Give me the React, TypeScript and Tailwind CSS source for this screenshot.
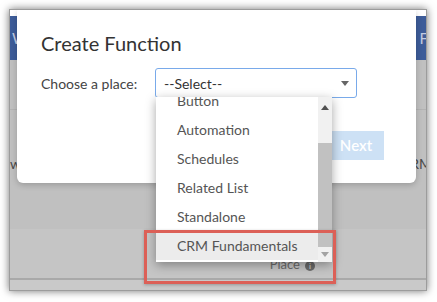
const ITEMS = ["Button", "Automation", "Schedules", "Related List", "Standalone", "CRM Fundamentals"];

function Caret({ className }: { className?: string }) {
  return (
    <svg width="8" height="5" viewBox="0 0 8 5" className={className}>
      <path d="M0 0 L8 0 L4 5 Z" fill="currentColor" />
    </svg>
  );
}

function PlaceList() {
  return (
    <div className="absolute left-[146px] top-[87px] w-[176px] h-[165px] bg-white flex overflow-hidden shadow-[0_3px_10px_rgba(0,0,0,0.35)]">
      <div className="flex-1 overflow-hidden">
        <div className="-mt-[11px]">
          {ITEMS.map((item) => (
            <div
              key={item}
              className={`h-[29px] flex items-center pl-[21px] text-[14px] text-[#555] ${
                item === "CRM Fundamentals" ? "bg-[#ececec]" : ""
              }`}
            >
              {item}
            </div>
          ))}
        </div>
      </div>
      <div className="w-[14px] bg-[#f1f1f1] flex flex-col">
        <div className="h-[20px] flex items-center justify-center text-[#505050]">
          <Caret className="rotate-180" />
        </div>
        <div className="h-[26px]" />
        <div className="h-[104px] bg-[#c1c1c1]" />
        <div className="flex-1 flex items-center justify-center text-[#a3a3a3]">
          <Caret />
        </div>
      </div>
    </div>
  );
}

export default function App() {
  return (
    <div className="w-[437px] h-[302px] bg-white pt-[9px] pl-[9px] font-['Lato',sans-serif]">
      <div className="relative w-[418px] h-[282px] border border-[#9c9c9c] overflow-hidden shadow-[0_0_8px_rgba(0,0,0,0.55)] flex flex-col">
        {/* page behind the overlay */}
        <div className="h-[6px] bg-white" />
        <div className="h-[44px] bg-[#3d5c99] flex items-center justify-between px-[2px] text-[15px] text-[#c3cbe0]">
          <span>W</span>
          <span className="pr-[0px] -mr-[4px]">F</span>
        </div>
        <div className="h-[50px] bg-[#c0c0c0] border-b border-[#b3b3b3]" />
        <div className="h-[119px] bg-[#c0c0c0] flex items-start justify-between pt-[43px] text-[14px] text-[#4a4a4a]">
          <span>w</span>
          <span className="-mr-[6px]">CRM</span>
        </div>
        <div className="h-[49px] bg-[#c5c5c5] flex items-end justify-end pr-[111px] pb-[4px] gap-[5px] text-[13px] text-[#6b6b6b]">
          <span>Place</span>
          <span className="w-[10px] h-[10px] rounded-full bg-[#6b6b6b] text-[8px] leading-[10px] text-center text-[#c5c5c5] font-bold mb-[3px]">
            i
          </span>
        </div>
        <div className="h-[2px] bg-[#a9a9a9]" />
        <div className="flex-1 bg-[#c9c9c9]" />

        {/* modal */}
        <div className="absolute left-[7px] top-0 w-[399px] h-[173px] bg-white rounded-b-[6px] shadow-[0_2px_6px_rgba(0,0,0,0.2)] pl-[24px] pt-[21px]">
          <h2 className="text-[20px] leading-[24px] text-[#333]">Create Function</h2>
          <div className="mt-[13px] flex items-center">
            <span className="w-[114px] text-[14px] text-[#444]">Choose a place:</span>
            <div className="w-[202px] h-[30px] border border-[#79aaea] rounded-[3px] flex items-center justify-between pl-[8px] pr-[7px] text-[14px] text-[#333]">
              <span>--Select--</span>
              <Caret className="text-[#666]" />
            </div>
          </div>
          <div className="mt-[33px] flex justify-end pr-[32px]">
            <button
              type="button"
              className="w-[56px] h-[29px] bg-[#cde1f5] text-white text-[15px] font-semibold pl-[0px]"
            >
              Next
            </button>
          </div>
        </div>

        <PlaceList />

        {/* annotation */}
        <div className="absolute left-[134px] top-[220px] w-[192px] h-[54px] border-[3px] border-[#dc6057] shadow-[0_1px_3px_rgba(0,0,0,0.25)]" />
      </div>
    </div>
  );
}
